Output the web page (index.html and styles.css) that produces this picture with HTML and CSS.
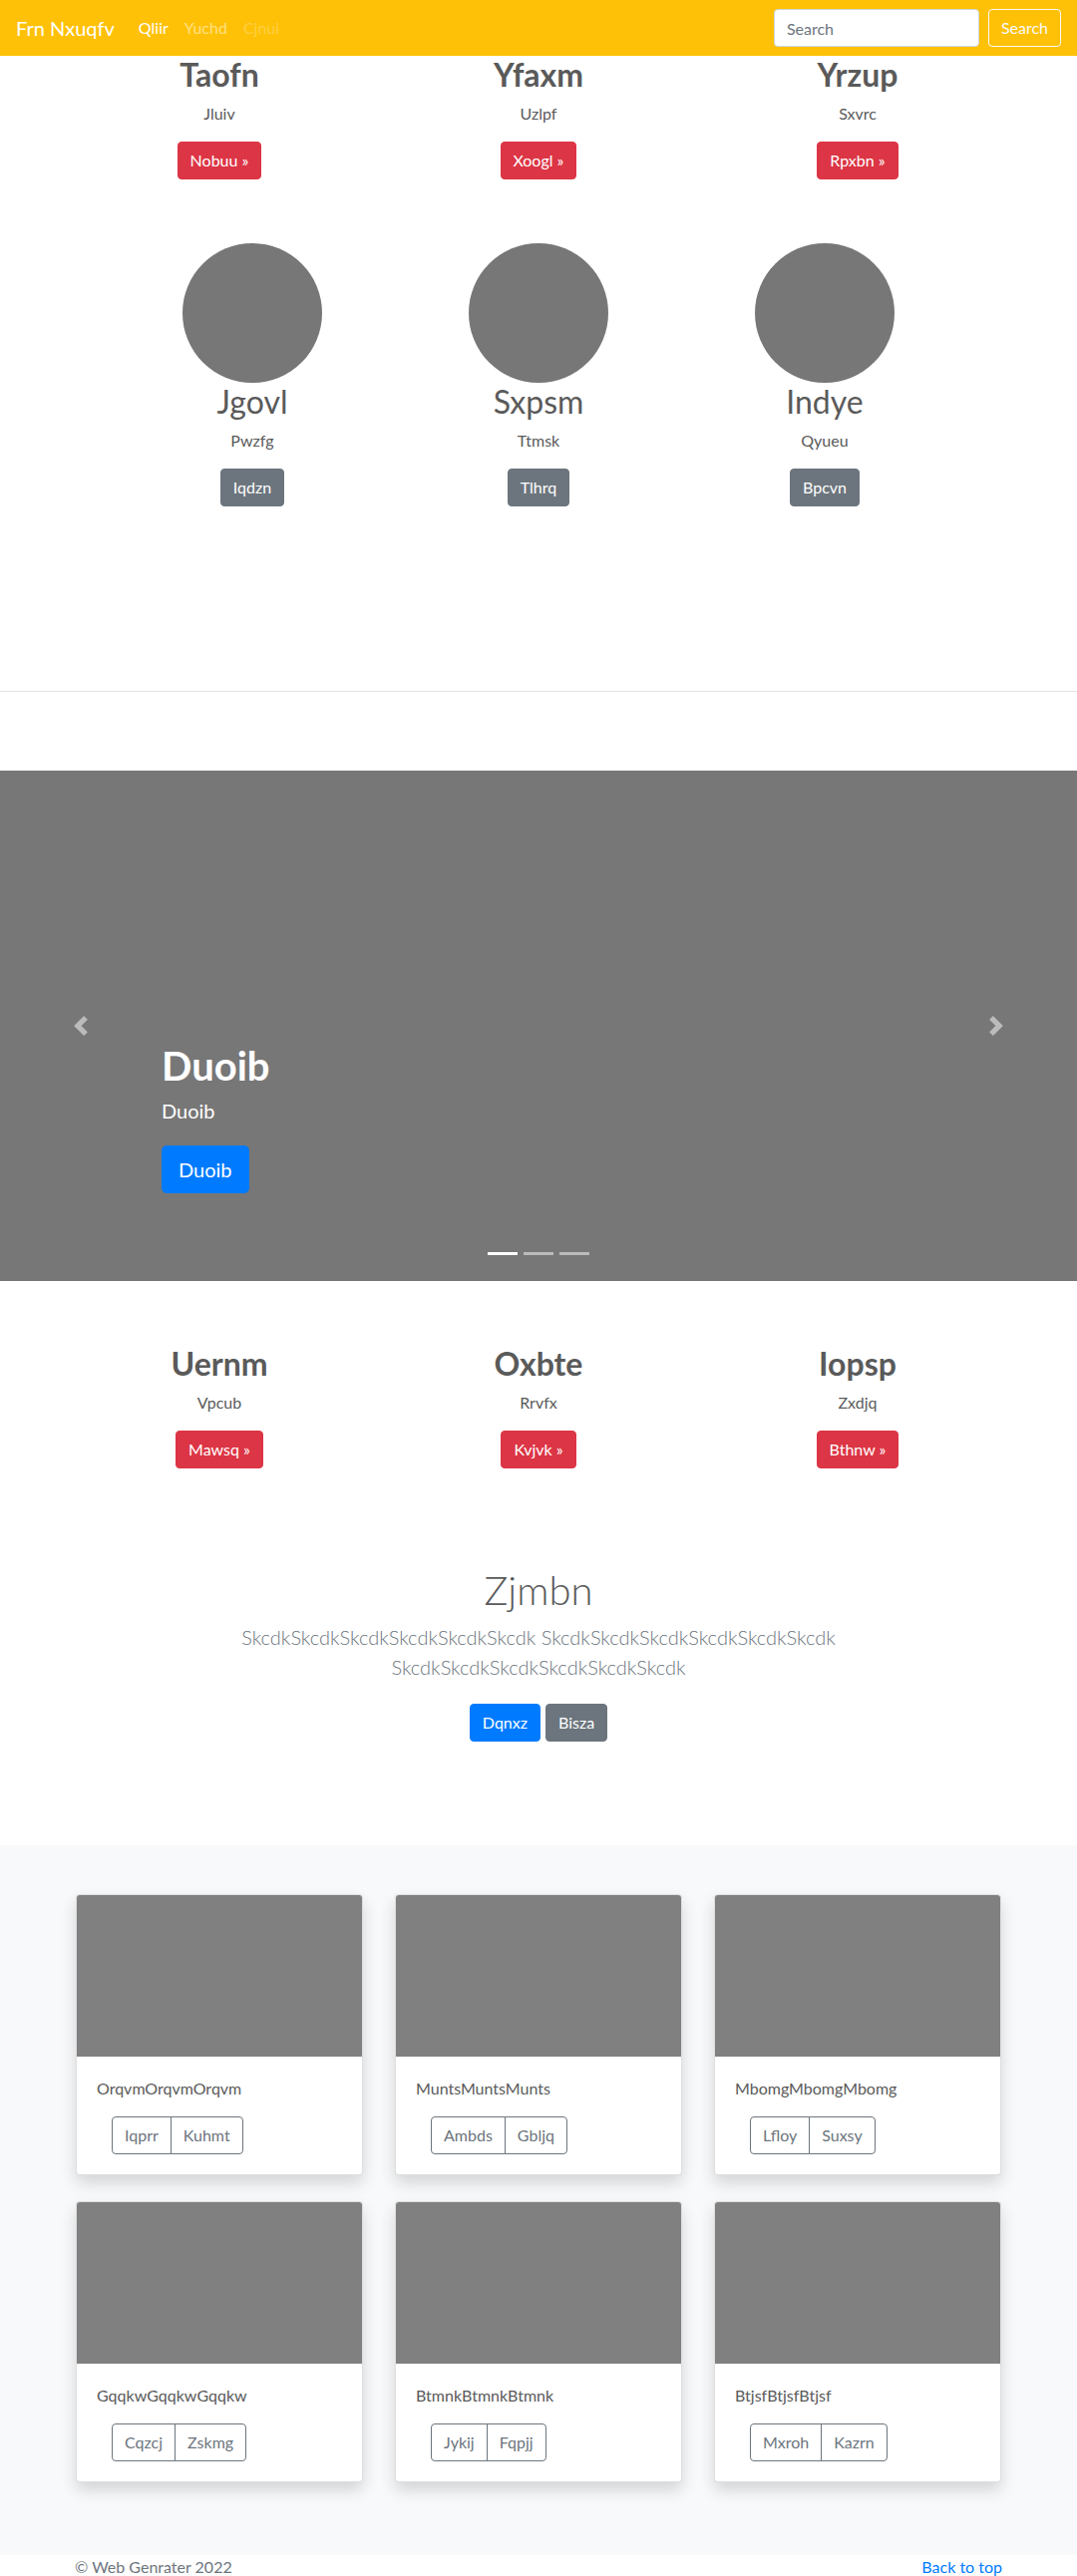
FILE: index.html
```html
<!DOCTYPE html>
<html lang="en">
<head>
<meta charset="utf-8">
<title>Frn Nxuqfv</title>
<link rel="stylesheet" href="styles.css">
</head>
<body>
<nav class="navbar">
  <a class="brand" href="#">Frn Nxuqfv</a>
  <ul class="nav-links">
    <li><a class="nav-link active" href="#">Qliir</a></li>
    <li><a class="nav-link" href="#">Yuchd</a></li>
    <li><a class="nav-link disabled" href="#">Cjnui</a></li>
  </ul>
  <form class="search-form">
    <input class="search-input" type="text" placeholder="Search">
    <button class="btn btn-outline-light" type="button">Search</button>
  </form>
</nav>

<section class="features features-top">
  <div class="feature">
    <h2 class="feature-title">Taofn</h2>
    <p class="feature-text">Jluiv</p>
    <a class="btn btn-danger" href="#">Nobuu &raquo;</a>
  </div>
  <div class="feature">
    <h2 class="feature-title">Yfaxm</h2>
    <p class="feature-text">Uzlpf</p>
    <a class="btn btn-danger" href="#">Xoogl &raquo;</a>
  </div>
  <div class="feature">
    <h2 class="feature-title">Yrzup</h2>
    <p class="feature-text">Sxvrc</p>
    <a class="btn btn-danger" href="#">Rpxbn &raquo;</a>
  </div>
</section>

<section class="marketing">
  <div class="person">
    <div class="avatar"></div>
    <h2 class="person-name">Jgovl</h2>
    <p class="feature-text">Pwzfg</p>
    <a class="btn btn-secondary" href="#">Iqdzn</a>
  </div>
  <div class="person">
    <div class="avatar"></div>
    <h2 class="person-name">Sxpsm</h2>
    <p class="feature-text">Ttmsk</p>
    <a class="btn btn-secondary" href="#">Tlhrq</a>
  </div>
  <div class="person">
    <div class="avatar"></div>
    <h2 class="person-name">Indye</h2>
    <p class="feature-text">Qyueu</p>
    <a class="btn btn-secondary" href="#">Bpcvn</a>
  </div>
</section>

<hr class="divider">

<section class="carousel">
  <a class="carousel-control prev" href="#">
    <svg width="20" height="20" viewBox="0 0 8 8"><path fill="#fff" d="M5.25 0l-4 4 4 4 1.5-1.5L4.25 4l2.5-2.5L5.25 0z"/></svg>
  </a>
  <div class="carousel-caption">
    <h1 class="caption-title">Duoib</h1>
    <p class="caption-text">Duoib</p>
    <a class="btn btn-lg btn-primary" href="#">Duoib</a>
  </div>
  <a class="carousel-control next" href="#">
    <svg width="20" height="20" viewBox="0 0 8 8"><path fill="#fff" d="M2.75 0l-1.5 1.5L3.75 4l-2.5 2.5L2.75 8l4-4-4-4z"/></svg>
  </a>
  <ol class="indicators">
    <li class="indicator active"></li>
    <li class="indicator"></li>
    <li class="indicator"></li>
  </ol>
</section>

<section class="features features-bottom">
  <div class="feature">
    <h2 class="feature-title">Uernm</h2>
    <p class="feature-text">Vpcub</p>
    <a class="btn btn-danger" href="#">Mawsq &raquo;</a>
  </div>
  <div class="feature">
    <h2 class="feature-title">Oxbte</h2>
    <p class="feature-text">Rrvfx</p>
    <a class="btn btn-danger" href="#">Kvjvk &raquo;</a>
  </div>
  <div class="feature">
    <h2 class="feature-title">Iopsp</h2>
    <p class="feature-text">Zxdjq</p>
    <a class="btn btn-danger" href="#">Bthnw &raquo;</a>
  </div>
</section>

<section class="jumbotron">
  <h1 class="jumbotron-heading">Zjmbn</h1>
  <p class="lead">SkcdkSkcdkSkcdkSkcdkSkcdkSkcdk SkcdkSkcdkSkcdkSkcdkSkcdkSkcdk SkcdkSkcdkSkcdkSkcdkSkcdkSkcdk</p>
  <div class="jumbotron-actions">
    <a class="btn btn-primary" href="#">Dqnxz</a>
    <a class="btn btn-secondary" href="#">Bisza</a>
  </div>
</section>

<section class="album">
  <div class="card-grid">
    <div class="card">
      <div class="card-img"></div>
      <div class="card-body">
        <p class="card-text">OrqvmOrqvmOrqvm</p>
        <div class="btn-group"><button class="btn btn-outline-secondary">Iqprr</button><button class="btn btn-outline-secondary">Kuhmt</button></div>
      </div>
    </div>
    <div class="card">
      <div class="card-img"></div>
      <div class="card-body">
        <p class="card-text">MuntsMuntsMunts</p>
        <div class="btn-group"><button class="btn btn-outline-secondary">Ambds</button><button class="btn btn-outline-secondary">Gbljq</button></div>
      </div>
    </div>
    <div class="card">
      <div class="card-img"></div>
      <div class="card-body">
        <p class="card-text">MbomgMbomgMbomg</p>
        <div class="btn-group"><button class="btn btn-outline-secondary">Lfloy</button><button class="btn btn-outline-secondary">Suxsy</button></div>
      </div>
    </div>
    <div class="card">
      <div class="card-img"></div>
      <div class="card-body">
        <p class="card-text">GqqkwGqqkwGqqkw</p>
        <div class="btn-group"><button class="btn btn-outline-secondary">Cqzcj</button><button class="btn btn-outline-secondary">Zskmg</button></div>
      </div>
    </div>
    <div class="card">
      <div class="card-img"></div>
      <div class="card-body">
        <p class="card-text">BtmnkBtmnkBtmnk</p>
        <div class="btn-group"><button class="btn btn-outline-secondary">Jykij</button><button class="btn btn-outline-secondary">Fqpjj</button></div>
      </div>
    </div>
    <div class="card">
      <div class="card-img"></div>
      <div class="card-body">
        <p class="card-text">BtjsfBtjsfBtjsf</p>
        <div class="btn-group"><button class="btn btn-outline-secondary">Mxroh</button><button class="btn btn-outline-secondary">Kazrn</button></div>
      </div>
    </div>
  </div>
</section>

<footer class="footer">
  <p class="copyright">&copy; Web Genrater 2022</p>
  <a class="back-top" href="#">Back to top</a>
</footer>
</body>
</html>
```

FILE: styles.css
```css
* { box-sizing: border-box; }

html, body {
  margin: 0;
  padding: 0;
}

body {
  font-family: Lato, "Open Sans", "Liberation Sans", sans-serif;
  font-size: 16px;
  line-height: 24px;
  color: #5a5a5a;
  background: #fff;
}

a { text-decoration: none; }

p { margin: 0; }
h1, h2 { margin: 0; }

/* ---------- Navbar ---------- */
.navbar {
  height: 56px;
  background: #ffc107;
  display: flex;
  align-items: center;
  padding: 0 16px;
}

.brand {
  color: #fff;
  font-size: 20px;
  line-height: 30px;
  margin-right: 16px;
}

.nav-links {
  list-style: none;
  display: flex;
  margin: 0;
  padding: 0;
  flex: 1;
}

.nav-link {
  display: block;
  padding: 0 8px;
  color: rgba(255, 255, 255, 0.5);
  line-height: 24px;
}

.nav-link.active { color: #fff; }
.nav-link.disabled { color: rgba(255, 255, 255, 0.25); }

.search-form {
  display: flex;
  align-items: center;
  gap: 9px;
}

.search-input {
  width: 206px;
  height: 38px;
  padding: 6px 12px;
  border: 1px solid #ced4da;
  border-radius: 4px;
  font-family: inherit;
  font-size: 16px;
  color: #495057;
  background: #fff;
}

.search-input::placeholder { color: #6c757d; }

/* ---------- Buttons ---------- */
.btn {
  display: inline-block;
  font-family: inherit;
  font-size: 16px;
  line-height: 24px;
  padding: 6px 12px;
  border: 1px solid transparent;
  border-radius: 4px;
  color: #fff;
  background: transparent;
  cursor: pointer;
}

.btn-danger { background: #dc3545; border-color: #dc3545; }
.btn-secondary { background: #6c757d; border-color: #6c757d; }
.btn-primary { background: #007bff; border-color: #007bff; }

.btn-outline-light {
  color: #f8f9fa;
  border-color: #f8f9fa;
}

.btn-lg {
  font-size: 20px;
  line-height: 30px;
  padding: 8px 16px;
  border-radius: 5px;
}

/* ---------- Features ---------- */
.features {
  width: 960px;
  margin: 0 auto;
  display: grid;
  grid-template-columns: repeat(3, 1fr);
  text-align: center;
}

.feature-title {
  font-size: 32px;
  line-height: 38px;
  font-weight: 700;
  margin-bottom: 8px;
}

.feature-text {
  margin-bottom: 16px;
}

.features-bottom { margin-top: 64px; }

/* ---------- Marketing ---------- */
.marketing {
  width: 861px;
  margin: 0 auto;
  padding-top: 64px;
  display: grid;
  grid-template-columns: repeat(3, 1fr);
  text-align: center;
}

.avatar {
  width: 140px;
  height: 140px;
  border-radius: 50%;
  background: #777;
  margin: 0 auto;
}

.person-name {
  font-size: 32px;
  line-height: 38px;
  font-weight: 400;
  margin-bottom: 8px;
}

.divider {
  margin: 185px 0 0;
  border: 0;
  border-top: 1px solid rgba(0, 0, 0, 0.1);
  height: 0;
}

/* ---------- Carousel ---------- */
.carousel {
  position: relative;
  margin-top: 79px;
  height: 512px;
  background: #777;
  display: flex;
  align-items: flex-start;
}

.carousel-control {
  position: absolute;
  top: 0;
  bottom: 0;
  width: 15%;
  display: flex;
  align-items: center;
  justify-content: center;
  opacity: 0.5;
}

.carousel-control.prev { left: 0; }
.carousel-control.next { right: 0; }

.carousel-caption {
  margin: 272px 15% 0;
  color: #fff;
  text-align: left;
}

.caption-title {
  font-size: 40px;
  line-height: 48px;
  font-weight: 700;
}

.caption-text {
  font-size: 20px;
  line-height: 30px;
  margin: 6px 0 20px;
}

.indicators {
  position: absolute;
  left: 0;
  right: 0;
  bottom: 26px;
  margin: 0;
  padding: 0;
  list-style: none;
  display: flex;
  justify-content: center;
  gap: 6px;
}

.indicator {
  width: 30px;
  height: 3px;
  background: #fff;
  opacity: 0.5;
}

.indicator.active { opacity: 1; }

/* ---------- Jumbotron ---------- */
.jumbotron {
  width: 640px;
  margin: 0 auto;
  padding: 98px 15px 104px;
  text-align: center;
}

.jumbotron-heading {
  font-size: 40px;
  line-height: 48px;
  font-weight: 300;
  margin-bottom: 8px;
}

.lead {
  font-size: 20px;
  line-height: 30px;
  font-weight: 300;
  color: #6c757d;
}

.jumbotron-actions {
  margin-top: 22px;
  display: flex;
  justify-content: center;
  gap: 5px;
}

/* ---------- Album ---------- */
.album {
  background: #f8f9fa;
  padding: 49px 0 73px;
}

.card-grid {
  width: 928px;
  margin: 0 auto;
  display: grid;
  grid-template-columns: repeat(3, 288px);
  column-gap: 32px;
  row-gap: 26px;
}

.card {
  background: #fff;
  border: 1px solid rgba(0, 0, 0, 0.125);
  border-radius: 4px;
  box-shadow: 0 8px 16px rgba(0, 0, 0, 0.15);
  overflow: hidden;
}

.card-img {
  height: 162px;
  background: #808080;
}

.card-body {
  padding: 20px;
}

.card-text {
  margin-bottom: 16px;
}

.btn-group {
  display: inline-flex;
  margin-left: 15px;
}

.btn-outline-secondary {
  color: #6c757d;
  border-color: #6c757d;
  background: transparent;
}

.btn-group .btn:first-child {
  border-top-right-radius: 0;
  border-bottom-right-radius: 0;
}

.btn-group .btn + .btn {
  margin-left: -1px;
  border-top-left-radius: 0;
  border-bottom-left-radius: 0;
}

/* ---------- Footer ---------- */
.footer {
  width: 960px;
  margin: 0 auto;
  padding: 0 15px;
  display: flex;
  justify-content: space-between;
  color: #6c757d;
}

.back-top { color: #007bff; }
```
